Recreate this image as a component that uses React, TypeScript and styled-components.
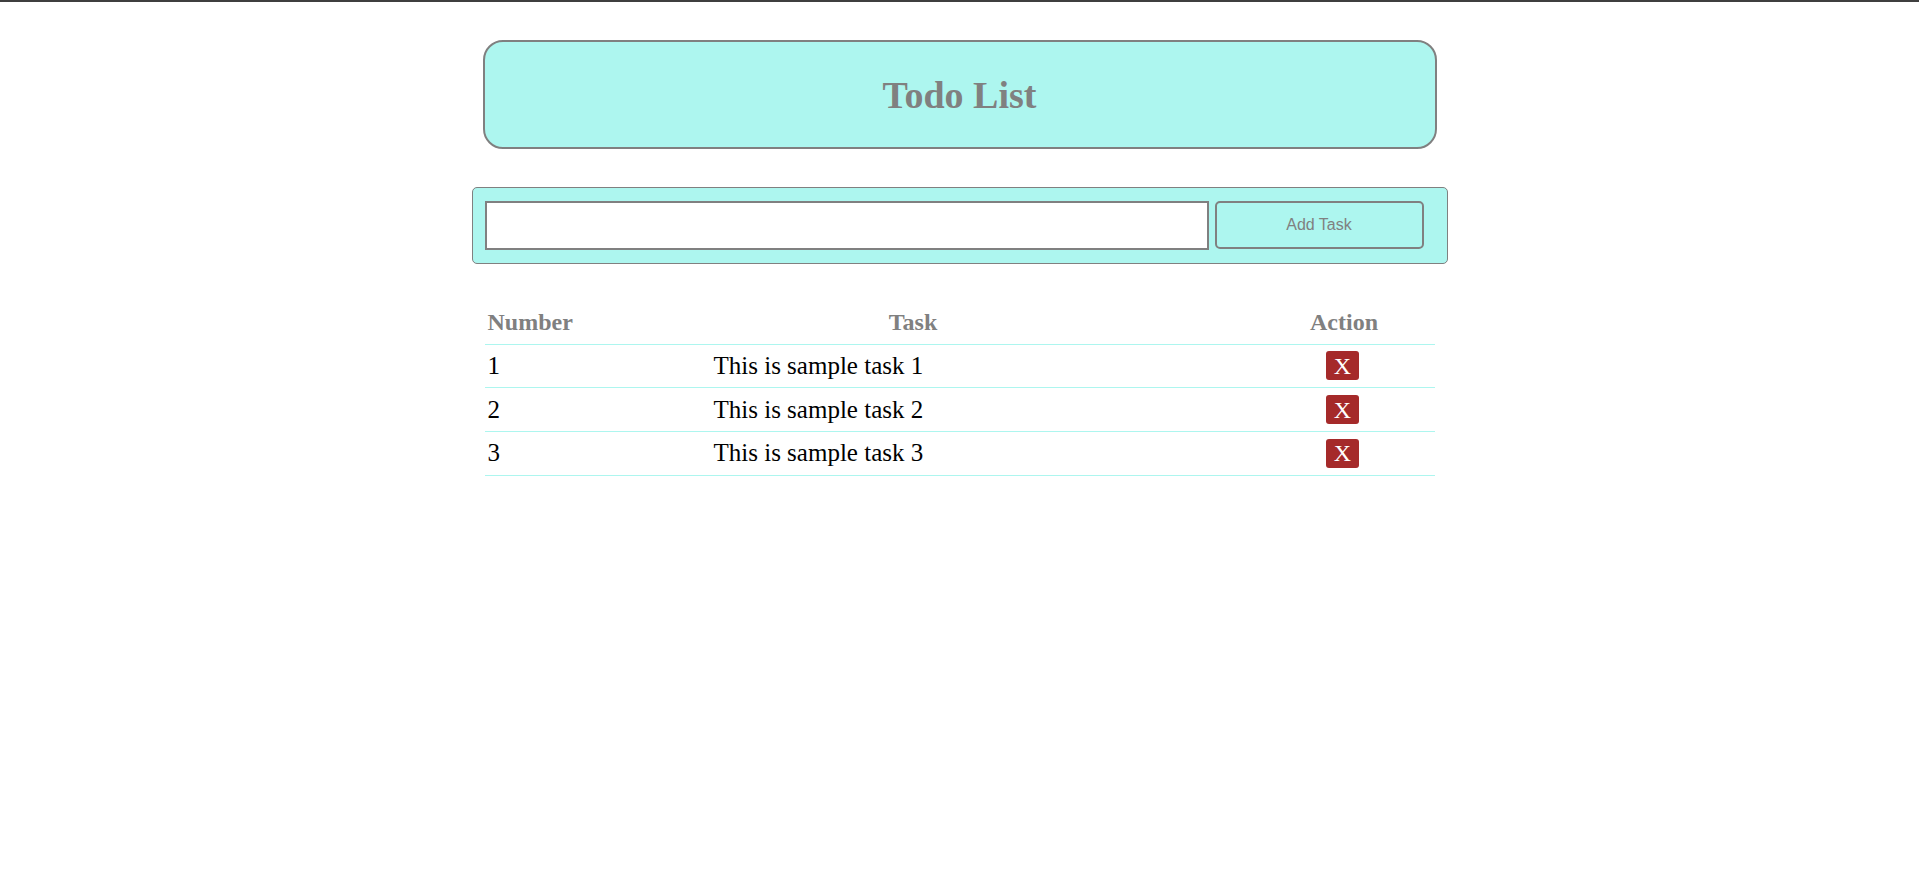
import React from "react";
import styled, { createGlobalStyle } from "styled-components";

const GlobalStyle = createGlobalStyle`
  html, body { margin: 0; padding: 0; background: #ffffff; }
  body {
    border-top: 2px solid #3f3f3f;
    font-family: "Liberation Serif", "Times New Roman", serif;
    color: #000;
  }
`;

const Page = styled.div`
  display: flex;
  flex-direction: column;
  align-items: center;
  padding-top: 38px;
`;

const Header = styled.header`
  box-sizing: border-box;
  width: 954px;
  height: 109px;
  display: flex;
  align-items: center;
  justify-content: center;
  background: #adf6ef;
  border: 2px solid #808080;
  border-radius: 20px;
`;

const Title = styled.h1`
  margin: 0;
  font-family: "Liberation Serif", "Times New Roman", serif;
  font-size: 38px;
  font-weight: bold;
  color: #808080;
`;

const Form = styled.form`
  box-sizing: border-box;
  width: 976px;
  margin-top: 38px;
  display: flex;
  gap: 6px;
  padding: 13px 22px 13px 12px;
  background: #adf6ef;
  border: 1px solid #808080;
  border-radius: 5px;
`;

const TaskInput = styled.input`
  box-sizing: border-box;
  width: 724px;
  height: 49px;
  margin: 0;
  border: 2px solid #808080;
  background: #ffffff;
  font-size: 16px;
  outline: none;
`;

const AddButton = styled.button`
  box-sizing: border-box;
  width: 209px;
  height: 48px;
  margin: 0;
  background: #adf6ef;
  border: 2px solid #808080;
  border-radius: 5px;
  color: #808080;
  font-family: "Liberation Sans", Arial, sans-serif;
  font-size: 16px;
  cursor: pointer;
`;

const Table = styled.div`
  width: 950px;
  margin-top: 37px;
  display: grid;
  grid-template-columns: 226px 540px 184px;
`;

const Row = styled.div`
  display: contents;
`;

const HeadCell = styled.div<{ $align: "left" | "center"; $padRight?: number }>`
  box-sizing: border-box;
  height: 43.67px;
  display: flex;
  align-items: center;
  justify-content: ${(p) => (p.$align === "left" ? "flex-start" : "center")};
  padding: 0 ${(p) => p.$padRight ?? 0}px 0 3px;
  border-bottom: 1px solid #adf6ef;
  font-size: 24px;
  font-weight: bold;
  color: #808080;
`;

const Cell = styled.div<{ $center?: boolean }>`
  box-sizing: border-box;
  height: 43.67px;
  display: flex;
  align-items: center;
  justify-content: ${(p) => (p.$center ? "center" : "flex-start")};
  padding-left: ${(p) => (p.$center ? 0 : 3)}px;
  border-bottom: 1px solid #adf6ef;
  font-size: 25px;
  color: #000;
`;

const DeleteButton = styled.button`
  box-sizing: border-box;
  width: 33px;
  height: 29px;
  padding: 0;
  margin: 0;
  display: flex;
  align-items: center;
  justify-content: center;
  background: #a52a2a;
  border: none;
  border-radius: 3px;
  color: #ffffff;
  font-family: "Liberation Serif", "Times New Roman", serif;
  font-size: 24px;
  line-height: 1;
  cursor: pointer;
`;

const tasks = [
  { id: 1, text: "This is sample task 1" },
  { id: 2, text: "This is sample task 2" },
  { id: 3, text: "This is sample task 3" },
];

export default function App() {
  return (
    <>
      <GlobalStyle />
      <Page>
        <Header>
          <Title>Todo List</Title>
        </Header>
        <Form onSubmit={(e) => e.preventDefault()}>
          <TaskInput type="text" />
          <AddButton type="submit">Add Task</AddButton>
        </Form>
        <Table>
          <Row>
            <HeadCell $align="left">Number</HeadCell>
            <HeadCell $align="center" $padRight={138}>Task</HeadCell>
            <HeadCell $align="center">Action</HeadCell>
          </Row>
          {tasks.map((t) => (
            <Row key={t.id}>
              <Cell>{t.id}</Cell>
              <Cell>{t.text}</Cell>
              <Cell $center>
                <DeleteButton type="button">X</DeleteButton>
              </Cell>
            </Row>
          ))}
        </Table>
      </Page>
    </>
  );
}
